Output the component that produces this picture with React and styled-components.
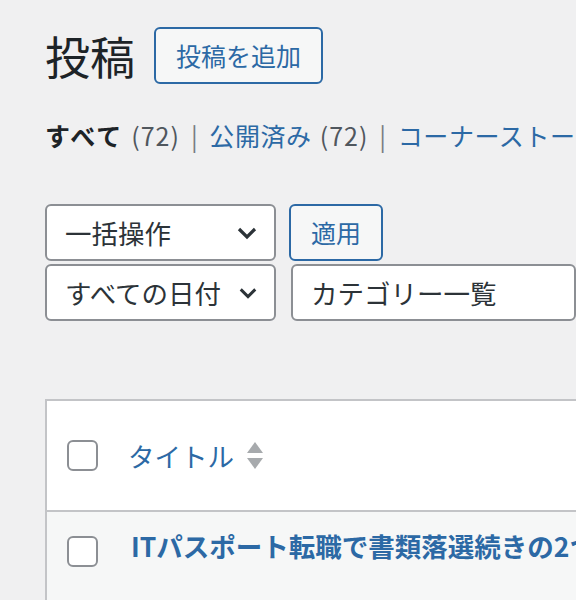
import React from 'react';
import styled, { createGlobalStyle } from 'styled-components';

const GlobalStyle = createGlobalStyle`
  html, body {
    margin: 0;
    padding: 0;
    background: #f0f0f1;
    font-family: "Noto Sans CJK JP", "Noto Sans", "Liberation Sans", sans-serif;
    color: #1d2327;
    overflow: hidden;
  }
`;

const blue = '#2c69a5';

const Page = styled.div`
  padding: 27px 0 0 45px;
  width: 576px;
  height: 600px;
  box-sizing: border-box;
  overflow: hidden;
`;

const Heading = styled.div`
  display: flex;
  align-items: center;
  gap: 19px;
`;

const Title = styled.h1`
  margin: 0;
  font-size: 45px;
  font-weight: 400;
  line-height: 57px;
  color: #1d2327;
`;

const OutlineButton = styled.button`
  height: ${({ $h }) => $h || 57}px;
  padding: 0 ${({ $px }) => $px || 20}px;
  border: 2px solid ${blue};
  border-radius: 6px;
  background: #f6f7f7;
  color: ${blue};
  font-family: inherit;
  font-size: 25px;
  line-height: 1;
  white-space: nowrap;
`;

const Views = styled.div`
  display: flex;
  align-items: center;
  margin-top: 33px;
  font-size: 25px;
  line-height: 36px;
  letter-spacing: 0.6px;
  white-space: nowrap;
`;

const ViewItem = styled.span`
  color: ${({ $current }) => ($current ? '#1d2327' : blue)};
  font-weight: ${({ $current }) => ($current ? 700 : 400)};
  letter-spacing: ${({ $current }) => ($current ? '2px' : 'inherit')};
`;

const Count = styled.span`
  color: #50575e;
  font-weight: 400;
  margin-left: 8px;
  letter-spacing: 1px;
`;

const Sep = styled.span`
  color: #787c82;
  margin: 0 11px;
`;

const Filters = styled.div`
  margin-top: 51px;
  display: flex;
  flex-direction: column;
  gap: 3px;
`;

const FilterRow = styled.div`
  display: flex;
  gap: ${({ $gap }) => $gap}px;
`;

const Select = styled.div`
  width: ${({ $w }) => ($w ? `${$w}px` : 'auto')};
  flex: ${({ $grow }) => ($grow ? '1 0 auto' : 'none')};
  height: ${({ $h }) => $h}px;
  box-sizing: border-box;
  border: 2px solid #8c8f94;
  border-radius: 6px;
  background: #fff;
  display: flex;
  align-items: center;
  justify-content: space-between;
  padding: 0 16px 0 18px;
  font-size: 26.5px;
  color: #2c3338;
  white-space: nowrap;
`;

const Chevron = ({ small }) => (
  <svg width={small ? 20 : 22} height="14" viewBox="0 0 22 14">
    <polyline points="3,3 11,11 19,3" fill="none" stroke="#2c3338" strokeWidth="3.2" />
  </svg>
);

const Table = styled.div`
  margin-top: 78px;
  margin-right: -60px;
  background: #fff;
  border: 2px solid #c3c4c7;
  border-right: none;
`;

const Row = styled.div`
  display: flex;
  align-items: ${({ $top }) => ($top ? 'flex-start' : 'center')};
  height: ${({ $h }) => $h}px;
  padding: ${({ $pt }) => $pt || 0}px 0 0 20px;
  box-sizing: border-box;
  background: ${({ $alt }) => ($alt ? '#f6f7f7' : '#fff')};
  border-top: ${({ $divider }) => ($divider ? '2px solid #c3c4c7' : 'none')};
`;

const Checkbox = styled.span`
  width: 31px;
  height: 31px;
  box-sizing: border-box;
  border: 2px solid #8c8f94;
  border-radius: 6px;
  background: #fff;
  flex: none;
  margin-top: ${({ $mt }) => $mt || 0}px;
`;

const ColumnTitle = styled.span`
  margin-left: 30px;
  display: flex;
  align-items: center;
  gap: 12px;
  color: ${blue};
  font-size: 26.5px;
  white-space: nowrap;
`;

const SortArrows = () => (
  <svg width="18" height="30" viewBox="0 0 18 30">
    <polygon points="9,1 17,12 1,12" fill="#a7aaad" />
    <polygon points="1,17 17,17 9,28" fill="#a7aaad" />
  </svg>
);

const PostTitle = styled.a`
  margin-left: 33px;
  color: ${blue};
  font-size: 26.5px;
  font-weight: 700;
  line-height: 24px;
  white-space: nowrap;
  text-decoration: none;
`;

export default function App() {
  return (
    <>
      <GlobalStyle />
      <Page>
        <Heading>
          <Title>投稿</Title>
          <OutlineButton>投稿を追加</OutlineButton>
        </Heading>

        <Views>
          <ViewItem $current>
            すべて<Count>(72)</Count>
          </ViewItem>
          <Sep>|</Sep>
          <ViewItem>
            公開済み<Count>(72)</Count>
          </ViewItem>
          <Sep>|</Sep>
          <ViewItem>コーナーストーン</ViewItem>
        </Views>

        <Filters>
          <FilterRow $gap={13}>
            <Select $w={231} $h={57}>
              一括操作
              <Chevron />
            </Select>
            <OutlineButton $h={57} $px={20}>適用</OutlineButton>
          </FilterRow>
          <FilterRow $gap={15}>
            <Select $w={231} $h={57}>
              すべての日付
              <Chevron small />
            </Select>
            <Select $grow $h={57}>
              カテゴリー一覧
            </Select>
          </FilterRow>
        </Filters>

        <Table>
          <Row $h={109}>
            <Checkbox />
            <ColumnTitle>
              タイトル
              <SortArrows />
            </ColumnTitle>
          </Row>
          <Row $h={100} $alt $divider $top $pt={22}>
            <Checkbox $mt={2} />
            <PostTitle>ITパスポート転職で書類落選続きの2つの理由</PostTitle>
          </Row>
        </Table>
      </Page>
    </>
  );
}
